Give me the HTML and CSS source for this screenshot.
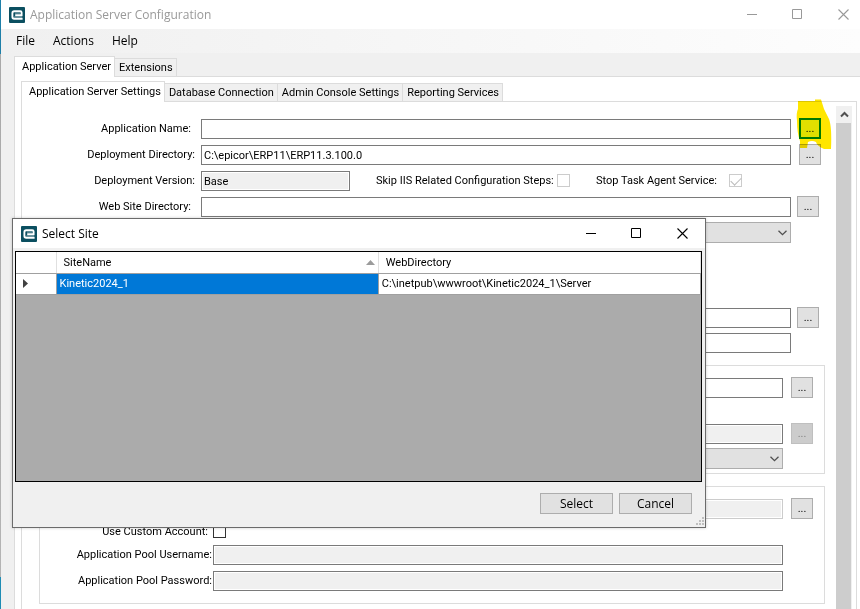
FILE: index.html
```
<!DOCTYPE html>
<html lang="en">
<head>
  <meta charset="UTF-8">
  <title>Application Server Configuration</title>
  <meta name="viewport" content="width=device-width, initial-scale=1.0">
  <link rel="stylesheet" href="styles.css">
</head>
<body>

<svg class="defs" aria-hidden="true">
  <symbol id="logo" viewBox="0 0 16 16">
    <rect width="16" height="16" rx="1" fill="#0b4f60"/>
    <path d="M6 6.2H11M5 10H13" stroke="#6d96a0" stroke-width="1"/>
    <path d="M13.6 11.7H5.2Q3.4 11.7 3.4 10V6Q3.4 4.2 5.2 4.2H11.2Q12.6 4.2 12.6 5.4V8.2H6.2" fill="none" stroke="#fff" stroke-width="1.9"/>
  </symbol>
  <symbol id="minimize" viewBox="0 0 11 11"><path d="M0 5.5H10" fill="none" stroke="currentColor"/></symbol>
  <symbol id="maximize" viewBox="0 0 11 11"><path d="M.5 .5H9.5V9.5H.5Z" fill="none" stroke="currentColor"/></symbol>
  <symbol id="close" viewBox="0 0 11 11"><path d="M.5 .5L10.5 10.5M10.5 .5L.5 10.5" fill="none" stroke="currentColor" stroke-width="1.1"/></symbol>
  <symbol id="chevron" viewBox="0 0 9 6"><path d="M.5 .7L4.5 4.7L8.5 .7" fill="none" stroke="currentColor" stroke-width="1.3"/></symbol>
</svg>

<div class="window">
  <header class="titlebar">
    <svg class="logo"><use href="#logo"/></svg>
    <span class="title">Application Server Configuration</span>
    <button class="win-btn" aria-label="Minimize"><svg><use href="#minimize"/></svg></button>
    <button class="win-btn" aria-label="Maximize"><svg><use href="#maximize"/></svg></button>
    <button class="win-btn" aria-label="Close"><svg><use href="#close"/></svg></button>
  </header>

  <nav class="menubar">
    <button>File</button>
    <button>Actions</button>
    <button>Help</button>
  </nav>

  <main class="workspace">
    <div class="tabs" role="tablist">
      <button class="tab active" role="tab" aria-selected="true">Application Server</button>
      <button class="tab" role="tab">Extensions</button>
    </div>
    <div class="tab-page outer">
      <div class="tabs" role="tablist">
        <button class="tab active" role="tab" aria-selected="true">Application Server Settings</button>
        <button class="tab" role="tab">Database Connection</button>
        <button class="tab" role="tab">Admin Console Settings</button>
        <button class="tab" role="tab">Reporting Services</button>
      </div>
      <div class="tab-page inner">
        <form class="settings">
          <div class="row">
            <label class="label inset" for="appName">Application Name:</label>
            <input class="text" type="text" id="appName">
            <div class="browse-wrap">
              <button type="button" class="browse marked" aria-label="Browse sites">...</button>
              <svg class="highlight" viewBox="0 0 36 52"><path d="M2 2L19 2V0.5H25L28 10L33 20Q36 28 35 50H28Q21 47 20 43Q16 41 12 43L11 49H4L4 42Q1 34 1 22Q0 14 2 10Z"/></svg>
            </div>
          </div>
          <div class="row">
            <label class="label" for="deployDir">Deployment Directory:</label>
            <input class="text" type="text" id="deployDir" value="C:\epicor\ERP11\ERP11.3.100.0">
            <button type="button" class="browse" aria-label="Browse deployment directory">...</button>
          </div>
          <div class="row">
            <label class="label" for="version">Deployment Version:</label>
            <input class="text short" type="text" id="version" value="Base" readonly>
            <label class="option" for="skipIis">Skip IIS Related Configuration Steps:</label>
            <input class="check" type="checkbox" id="skipIis" disabled>
            <label class="second" for="stopAgent">Stop Task Agent Service:</label>
            <input class="check spaced" type="checkbox" id="stopAgent" checked disabled>
          </div>
          <div class="row snug">
            <label class="label inset" for="webDir">Web Site Directory:</label>
            <input class="text" type="text" id="webDir">
            <button type="button" class="browse" aria-label="Browse web site directory">...</button>
          </div>
          <div class="row">
            <span class="label"></span>
            <span class="combo"><select aria-label="Application server option"></select><svg><use href="#chevron"/></svg></span>
          </div>
          <div class="row snug detached">
            <span class="label"></span>
            <input class="text" type="text" aria-label="Client directory">
            <button type="button" class="browse" aria-label="Browse client directory">...</button>
          </div>
          <div class="row tight">
            <span class="label"></span>
            <input class="text" type="text" aria-label="Client path">
          </div>

          <fieldset class="group">
            <div class="row">
              <span class="label"></span>
              <input class="text" type="text" aria-label="Certificate">
              <button type="button" class="browse" aria-label="Browse certificate">...</button>
            </div>
            <div class="row apart">
              <span class="label"></span>
              <input class="text" type="text" aria-label="Identity" readonly>
              <button type="button" class="browse" aria-label="Browse identity" disabled>...</button>
            </div>
            <div class="row tight">
              <span class="label"></span>
              <span class="combo"><select aria-label="Binding"></select><svg><use href="#chevron"/></svg></span>
            </div>
          </fieldset>

          <fieldset class="group pool">
            <div class="row">
              <span class="label"></span>
              <input class="text" type="text" aria-label="Application pool" disabled>
              <button type="button" class="browse" aria-label="Browse application pool">...</button>
            </div>
            <div class="row close">
              <label class="label inset" for="customAccount">Use Custom Account:</label>
              <input class="check" type="checkbox" id="customAccount">
            </div>
            <div class="row close">
              <label class="label" for="poolUser">Application Pool Username:</label>
              <input class="text" type="text" id="poolUser" readonly>
            </div>
            <div class="row">
              <label class="label" for="poolPassword">Application Pool Password:</label>
              <input class="text" type="text" id="poolPassword" readonly>
            </div>
          </fieldset>
        </form>
        <div class="scrollbar">
          <button class="scroll-up" aria-label="Scroll up"><svg viewBox="0 0 9 7"><path d="M1 5.5L4.5 2L8 5.5" fill="none" stroke="#505050" stroke-width="2"/></svg></button>
          <div class="thumb"></div>
        </div>
      </div>
    </div>
  </main>
</div>

<section class="dialog" role="dialog" aria-labelledby="dialogTitle">
  <header class="titlebar">
    <svg class="logo"><use href="#logo"/></svg>
    <span class="title" id="dialogTitle">Select Site</span>
    <button class="win-btn" aria-label="Minimize"><svg><use href="#minimize"/></svg></button>
    <button class="win-btn" aria-label="Maximize"><svg><use href="#maximize"/></svg></button>
    <button class="win-btn" aria-label="Close"><svg><use href="#close"/></svg></button>
  </header>
  <div class="grid-view">
    <table>
      <colgroup><col class="marker"><col><col></colgroup>
      <thead>
        <tr>
          <th></th>
          <th><div class="sortable">SiteName<svg viewBox="0 0 9 5"><path d="M0 5L4.5 0L9 5Z" fill="#9b9b9b"/></svg></div></th>
          <th>WebDirectory</th>
        </tr>
      </thead>
      <tbody>
        <tr>
          <td class="pointer"><svg viewBox="0 0 5 9"><path d="M0 0L5 4.5L0 9Z" fill="#404040"/></svg></td>
          <td class="selected">Kinetic2024_1</td>
          <td>C:\inetpub\wwwroot\Kinetic2024_1\Server</td>
        </tr>
      </tbody>
    </table>
  </div>
  <footer class="actions">
    <button>Select</button>
    <button>Cancel</button>
  </footer>
  <svg class="grip" viewBox="0 0 8 8"><path d="M6 0h2v2h-2zM3 3h2v2h-2zM6 3h2v2h-2zM0 6h2v2h-2zM3 6h2v2h-2zM6 6h2v2h-2z" fill="#bfbfbf"/></svg>
</section>

</body>
</html>
```
FILE: styles.css
```
* { box-sizing: border-box; }
body {
  margin: 0;
  height: 100vh;
  overflow: hidden;
  position: relative;
  background: #f0f0f0;
  font-family: Roboto, Arial, sans-serif;
  font-size: 11px;
  color: #000;
}
button, input, select {
  font: inherit;
  color: inherit;
  margin: 0;
  border-radius: 0;
}
button {
  padding: 0;
  border: 0;
  background: none;
}
svg { display: block; }
.defs {
  position: absolute;
  width: 0;
  height: 0;
}

/* main window */
.window {
  height: 100%;
  display: flex;
  flex-direction: column;
  padding-left: 1px;
  background: linear-gradient(#1e7fa8 54px, #a9a9a9 54px, #b4b4b4 577px, #1e8cb4 577px) left / 1px 100% no-repeat;
}
.titlebar, .menubar, .actions {
  font-family: "Open Sans", "Noto Sans", sans-serif;
  font-size: 12px;
}
.titlebar {
  display: flex;
  align-items: center;
  height: 29px;
  padding-left: 8px;
  background: #fff;
}
.titlebar .title {
  flex: 1;
  margin-left: 5px;
}
.window > .titlebar {
  color: #999;
  flex: none;
}
.logo {
  width: 16px;
  height: 16px;
}
.win-btn {
  width: 45px;
  height: 100%;
  display: flex;
  align-items: center;
  justify-content: center;
}
.win-btn:last-child { width: 46px; }
.win-btn svg {
  width: 11px;
  height: 11px;
}
.window .win-btn { padding-left: 12px; }
.menubar {
  display: flex;
  gap: 18px;
  flex: none;
  height: 24px;
  padding: 0 0 2px 15px;
  background: linear-gradient(90deg, #f0f0f0, #fdfdfd);
}
.workspace {
  flex: 1;
  min-height: 0;
  display: flex;
  flex-direction: column;
  padding: 3px 0 0 13px;
  background: #f0f0f0;
}

/* tabs */
.tabs {
  display: flex;
  align-items: flex-end;
  flex: none;
  height: 20px;
}
.tab {
  height: 18px;
  padding: 0 3px 0 4px;
  border: 1px solid #dcdcdc;
  border-width: 1px 1px 0 0;
  background: #f0f0f0;
  white-space: nowrap;
}
.tab.active {
  height: 21px;
  margin-bottom: -1px;
  padding: 0 3px 2px 7px;
  border-left-width: 1px;
  background: #fff;
  position: relative;
}
.tab-page {
  flex: 1;
  min-height: 0;
  display: flex;
  border: 1px solid #dcdcdc;
  border-bottom: 0;
  background: #fff;
}
.outer {
  flex-direction: column;
  padding: 4px 0 0 6px;
  border-right: 0;
}
.inner {
  margin-right: 3px;
  padding-right: 4px;
}

/* settings form */
.settings {
  flex: 1;
  min-width: 0;
  padding-top: 16px;
}
.row {
  display: flex;
  align-items: flex-end;
  height: 21px;
  margin-top: 5px;
  padding-right: 15px;
}
.row:first-child { margin-top: 0; }
.row.tight { margin-top: 4px; }
.row.close { margin-top: 2px; }
.row.apart { margin-top: 25px; }
.row.detached { margin-top: 64px; }
.row.snug { padding-right: 17px; }
.row label { align-self: center; }
.label {
  width: 179px;
  flex: none;
  padding-right: 6px;
  text-align: right;
}
.label.inset { padding-right: 10px; }
.text {
  flex: 1;
  min-width: 0;
  height: 20px;
  padding: 0 2px;
  border: 1px solid #7a7a7a;
  background: #fff;
}
.text:read-only {
  background: #f0f0f0;
  box-shadow: inset 0 0 0 1px #fff;
}
.text:disabled { border-color: #ccc; }
.text.short {
  flex: none;
  width: 149px;
  margin-right: 26px;
}
.text:last-child, .combo { margin-right: 30px; }
.option {
  width: 181px;
  white-space: nowrap;
}
.check {
  appearance: none;
  align-self: center;
  width: 13px;
  height: 13px;
  border: 1px solid #333;
  background: #fff;
}
.check:disabled { border-color: #ccc; }
.check:checked { position: relative; }
.check:checked::after {
  content: "";
  position: absolute;
  left: 1px;
  top: 2px;
  width: 9px;
  height: 5px;
  border: solid #bbb;
  border-width: 0 0 1px 1px;
  transform: rotate(-45deg);
}
.check.spaced { margin-left: 8px; }
.second {
  width: 125px;
  margin-left: 26px;
}
.browse {
  flex: none;
  width: 22px;
  height: 21px;
  margin-left: 8px;
  border: 1px solid #adadad;
  background: #e1e1e1;
}
.snug .browse { margin-left: 6px; }
.browse:disabled {
  border-color: #bfbfbf;
  background: #ccc;
  color: #838383;
}
.browse-wrap { position: relative; }
.browse.marked {
  display: block;
  border: 2px solid #008500;
  background: #e1f8ff;
}
.highlight {
  position: absolute;
  left: 5px;
  top: -19px;
  width: 36px;
  height: 52px;
  mix-blend-mode: multiply;
  pointer-events: none;
}
.highlight path { fill: #ffe600; }
.combo {
  flex: 1;
  position: relative;
  height: 21px;
}
.combo select {
  appearance: none;
  width: 100%;
  height: 100%;
  border: 1px solid #adadad;
  background: #e1e1e1;
}
.combo svg {
  position: absolute;
  right: 4px;
  top: 8px;
  width: 9px;
  height: 6px;
  color: #505050;
}
.group {
  margin: 12px 11px 0 17px;
  padding: 11px 11px 4px 0;
  border: 1px solid #dcdcdc;
  min-width: 0;
}
.group .label { width: 161px; }
.group .row { padding-right: 0; }
.group.pool { padding-bottom: 12px; }
.pool .label {
  width: 173px;
  padding-right: 1px;
}
.pool .label.inset { padding-right: 5px; }

.scrollbar {
  width: 16px;
  flex: none;
  display: flex;
  flex-direction: column;
  margin-top: 4px;
}
.scroll-up {
  height: 17px;
  display: flex;
  align-items: center;
  justify-content: center;
  background: #f0f0f0;
}
.scroll-up svg {
  width: 9px;
  height: 7px;
}
.thumb {
  flex: 1;
  background: #cdcdcd;
  border-right: 1px solid #f0f0f0;
}

/* site picker */
.dialog {
  position: absolute;
  left: 12px;
  right: 154px;
  top: 218px;
  border: 1px solid #6b6b6b;
  background: #f0f0f0;
  box-shadow: 0 0 3px rgba(0, 0, 0, 0.2);
}
.grid-view {
  height: 231px;
  margin: 3px 3px 0 2px;
  border: 1px solid #000;
  background: #ababab;
}
table {
  width: 100%;
  table-layout: fixed;
  border-collapse: collapse;
}
.marker { width: 40px; }
th, td {
  height: 21px;
  padding: 0 3px;
  border: 1px solid #a0a0a0;
  border-width: 0 1px 1px 0;
  background: #fff;
  text-align: left;
  font-weight: normal;
}
th {
  padding: 1px 3px 0 7px;
  border-right-color: #e0e0e0;
}
.sortable {
  display: flex;
  align-items: center;
  justify-content: space-between;
}
.sortable svg {
  width: 9px;
  height: 5px;
}
td.pointer { padding-left: 7px; }
.pointer svg {
  width: 5px;
  height: 9px;
}
td.selected {
  background: #0078d7;
  color: #fff;
}
.actions {
  display: flex;
  justify-content: flex-end;
  gap: 6px;
  padding: 11px 13px 13px;
}
.actions button {
  width: 73px;
  height: 21px;
  border: 1px solid #adadad;
  background: #e1e1e1;
}
.grip {
  position: absolute;
  right: 1px;
  bottom: 2px;
  width: 8px;
  height: 8px;
}
```
